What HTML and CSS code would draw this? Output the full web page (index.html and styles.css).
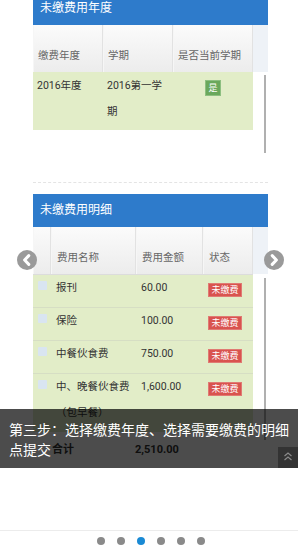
FILE: index.html
```html
<!DOCTYPE html>
<html lang="zh">
<head>
<meta charset="utf-8">
<title>缴费</title>
<link rel="stylesheet" href="styles.css">
</head>
<body>
<div class="stage">
  <div class="slide">
    <div class="panel-title cut">未缴费用年度</div>
    <div class="thead t1">
      <div class="th">缴费年度</div>
      <div class="th">学期</div>
      <div class="th">是否当前学期</div>
      <div class="th filler"></div>
    </div>
    <div class="tbody t1b">
      <div class="row">
        <div class="td">2016年度</div>
        <div class="td">2016第一学期</div>
        <div class="td center"><span class="badge yes">是</span></div>
      </div>
    </div>

    <div class="divider"></div>

    <div class="panel-title">未缴费用明细</div>
    <div class="thead t2">
      <div class="th"></div>
      <div class="th">费用名称</div>
      <div class="th">费用金额</div>
      <div class="th">状态</div>
      <div class="th filler"></div>
    </div>
    <div class="tbody t2b">
      <div class="row">
        <div class="td cb"><span class="check"></span></div>
        <div class="td">报刊</div>
        <div class="td">60.00</div>
        <div class="td"><span class="badge no">未缴费</span></div>
      </div>
      <div class="row">
        <div class="td cb"><span class="check"></span></div>
        <div class="td">保险</div>
        <div class="td">100.00</div>
        <div class="td"><span class="badge no">未缴费</span></div>
      </div>
      <div class="row">
        <div class="td cb"><span class="check"></span></div>
        <div class="td">中餐伙食费</div>
        <div class="td">750.00</div>
        <div class="td"><span class="badge no">未缴费</span></div>
      </div>
      <div class="row">
        <div class="td cb"><span class="check"></span></div>
        <div class="td">中、晚餐伙食费（包早餐）</div>
        <div class="td">1,600.00</div>
        <div class="td"><span class="badge no">未缴费</span></div>
      </div>
    </div>
    <div class="total">
      <div class="total-label">合计</div>
      <div class="total-value">2,510.00</div>
    </div>
  </div>

  <div class="scrollbar s1"></div>
  <div class="scrollbar s2"></div>

  <div class="nav prev">
    <svg width="20" height="20" viewBox="0 0 20 20"><circle cx="10" cy="10" r="10" fill="#9a9a9a"/><path d="M11.8 5.6 L7.6 10 L11.8 14.4" fill="none" stroke="#fff" stroke-width="3" stroke-linecap="round" stroke-linejoin="round"/></svg>
  </div>
  <div class="nav next">
    <svg width="20" height="20" viewBox="0 0 20 20"><circle cx="10" cy="10" r="10" fill="#9a9a9a"/><path d="M8.2 5.6 L12.4 10 L8.2 14.4" fill="none" stroke="#fff" stroke-width="3" stroke-linecap="round" stroke-linejoin="round"/></svg>
  </div>

  <div class="caption">第三步：选择缴费年度、选择需要缴费的明细点提交</div>
  <div class="to-top">
    <svg width="20" height="20" viewBox="0 0 20 20"><path d="M6.5 9 L10 6 L13.5 9 M6.5 13 L10 10 L13.5 13" fill="none" stroke="#8a8a8a" stroke-width="1.2"/></svg>
  </div>
</div>
<div class="pager">
  <span class="dot"></span>
  <span class="dot"></span>
  <span class="dot active"></span>
  <span class="dot"></span>
  <span class="dot"></span>
  <span class="dot"></span>
</div>
</body>
</html>
```
FILE: styles.css
```css
* { box-sizing: border-box; }
html, body { margin: 0; padding: 0; }
body {
  width: 298px;
  height: 550px;
  overflow: hidden;
  background: #fff;
  font-family: Roboto, "Noto Sans CJK SC", sans-serif;
}
.stage {
  position: relative;
  height: 530px;
  overflow: hidden;
}
.slide {
  margin-left: 33px;
  width: 235px;
}
.panel-title {
  height: 33px;
  background: #2e7bcb;
  color: #fff;
  font-size: 12px;
  line-height: 33px;
  padding-left: 7px;
}
.panel-title.cut { margin-top: -8px; }

.thead {
  display: grid;
  height: 47px;
}
.t1 { grid-template-columns: 70px 70px 80px 15px; }
.t2 { grid-template-columns: 18px 85px 67px 50px 15px; }
.th {
  background: linear-gradient(#fbfbfb, #ececec);
  border-right: 1px solid #e2e2e2;
  border-left: 1px solid #f6f6f6;
  display: flex;
  align-items: flex-end;
  padding: 0 0 8px 4px;
  font-size: 10.5px;
  line-height: 16px;
  color: #666;
}
.t2 .th { padding-left: 5px; }
.th.filler {
  background: #eef2f7;
  border: none;
}

.tbody {
  width: 220px;
  background: #e2edc8;
}
.row { display: grid; }
.t1b .row { grid-template-columns: 70px 70px 80px; }
.t2b .row {
  grid-template-columns: 18px 85px 67px 50px;
  border-top: 1px solid #d6dec4;
}
.t2b .row:first-child { border-top-color: #dcdcdc; }
.td {
  padding: 1px 4px 5px;
  font-size: 10.5px;
  line-height: 26px;
  color: #333;
}
.t2b .td { padding: 0 4px 6px 5px; }
.td.center { text-align: center; }
.td.cb { padding: 6px 0 0 5px; }
.check {
  display: block;
  width: 9px;
  height: 9px;
  background: #d9e5f1;
  border-radius: 1px;
}
.badge {
  display: inline-block;
  color: #fff;
  vertical-align: top;
}
.badge.yes {
  width: 16px;
  height: 16px;
  line-height: 14px;
  font-size: 9px;
  background: #6aa85c;
  border: 1px solid #8dbf80;
  text-align: center;
  margin-top: 7px;
}
.badge.no {
  width: 34px;
  height: 14px;
  line-height: 12px;
  font-size: 9px;
  text-align: center;
  background: #d9534f;
  border: 1px solid #e07a73;
  margin-top: 8px;
}

.divider {
  margin-top: 52px;
  margin-bottom: 11px;
  border-top: 1px dashed #e4e4e4;
  height: 1px;
}

.total {
  display: flex;
  padding-top: 5px;
  font-size: 11px;
  line-height: 26px;
  font-weight: bold;
  color: #333;
}
.total-label { width: 102px; padding-left: 19px; }

.scrollbar {
  position: absolute;
  left: 264px;
  width: 2px;
  background: #b0b0b0;
}
.s1 { top: 75px; height: 78px; }
.s2 { top: 278px; height: 162px; }

.nav {
  position: absolute;
  top: 250px;
  width: 20px;
  height: 20px;
}
.nav svg { display: block; }
.prev { left: 17px; }
.next { left: 264px; }

.caption {
  position: absolute;
  left: 0;
  top: 409px;
  width: 298px;
  height: 59px;
  padding: 11px 5px 0 9px;
  background: rgba(0, 0, 0, 0.7);
  color: #fff;
  font-size: 14px;
  line-height: 20px;
}
.to-top {
  position: absolute;
  left: 278px;
  top: 447px;
  width: 20px;
  height: 21px;
  background: #333;
}
.to-top svg { display: block; }

.pager {
  border-top: 1px solid #ececec;
  display: flex;
  gap: 12px;
  padding: 6px 0 0 97px;
}
.dot {
  width: 8px;
  height: 8px;
  border-radius: 50%;
  background: #8a8a8a;
}
.dot.active { background: #1a8ad4; }
```
